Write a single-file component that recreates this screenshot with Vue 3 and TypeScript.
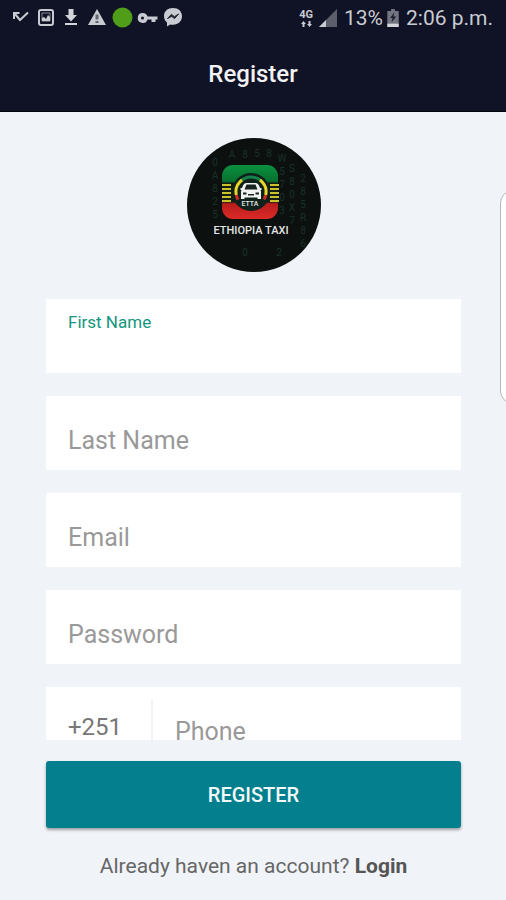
<script setup lang="ts">
import { reactive, ref } from 'vue'

interface Field {
  id: string
  label: string
  type: string
}

interface Rain {
  x: number
  y: number
  glyphs: string[]
}

const fields: Field[] = [
  { id: 'first-name', label: 'First Name', type: 'text' },
  { id: 'last-name', label: 'Last Name', type: 'text' },
  { id: 'email', label: 'Email', type: 'email' },
  { id: 'password', label: 'Password', type: 'password' },
]

const values = reactive<Record<string, string>>({
  'first-name': '',
  'last-name': '',
  email: '',
  password: '',
  phone: '',
})

const active = ref('first-name')

const isFloating = (id: string): boolean => active.value === id || values[id] !== ''

const rain: Rain[] = [
  { x: 28, y: 28, glyphs: ['0', 'A', '8', '2', '5'] },
  { x: 45, y: 20, glyphs: ['A'] },
  { x: 58, y: 20, glyphs: ['8'] },
  { x: 58, y: 118, glyphs: ['0'] },
  { x: 70, y: 19, glyphs: ['5'] },
  { x: 82, y: 19, glyphs: ['8'] },
  { x: 92, y: 118, glyphs: ['2'] },
  { x: 95, y: 24, glyphs: ['W', '5', '7', '0', '3'] },
  { x: 105, y: 34, glyphs: ['S', '8', '0', 'X', '7'] },
  { x: 116, y: 44, glyphs: ['2', '8', '5', 'R', '8', '6'] },
]
</script>

<template>
  <div class="screen">
    <header class="top">
      <div class="status">
        <div class="status-icons">
          <svg width="18" height="20" viewBox="0 0 18 20" aria-hidden="true">
            <path d="M2 11V5H7.500M2.500 5.500L8 12L16 4.500" fill="none" stroke="#c9cbd2" stroke-width="2" />
          </svg>
          <svg width="18" height="20" viewBox="0 0 18 20" aria-hidden="true">
            <rect x="2" y="2" width="14" height="15" rx="2" fill="none" stroke="#c9cbd2" stroke-width="2" />
            <path d="M5 5H13V13H5Z" fill="none" stroke="#85878f" stroke-width="1" />
            <path d="M5 13V10L7 9L9 11L11 7L13 9V13Z" fill="#c9cbd2" />
          </svg>
          <svg width="18" height="20" viewBox="0 0 18 20" aria-hidden="true">
            <path d="M6.500 1H11.500V7H15L9 13.500L3 7H6.500ZM3 15H15V17H3Z" fill="#d3d5db" />
          </svg>
          <svg width="20" height="20" viewBox="0 0 20 20" aria-hidden="true">
            <path d="M10 1L19 17H1Z" fill="#c9cbd2" />
            <path d="M8.500 6.500H11.500V11.500H8.500ZM8.500 13H11.500V15H8.500Z" fill="#62656f" />
          </svg>
          <svg width="18" height="20" viewBox="1 0 18 20" aria-hidden="true">
            <circle cx="9.500" cy="9.500" r="10" fill="#4f9d19" />
          </svg>
          <svg width="18" height="20" viewBox="1 0 18 20" aria-hidden="true">
            <path d="M5 5A5 5 0 1 0 9.500 11.500H13.500V14H17.500V11.500H19.500V8.500H9.500A5 5 0 0 0 5 5ZM4.500 8.500A1.500 1.500 0 1 1 4.500 11.500A1.500 1.500 0 1 1 4.500 8.500Z" fill="#c9cbd2" fill-rule="evenodd" />
          </svg>
          <svg width="18" height="20" viewBox="1 0 18 20" aria-hidden="true">
            <path d="M10 0C4.500 0 1 3.500 1 8C1 10.700 2.200 12.900 4 14.500V18.500L7.200 16.400C8.100 16.600 9 16.700 10 16.700C15.500 16.700 19 13 19 8.300C19 3.500 15.500 0 10 0Z" fill="#c9cbd2" />
            <path d="M4.500 10.500L8.500 6.300L11.300 8.700L15.500 6L11.600 10.600L8.700 8.400Z" fill="#242734" stroke="#242734" />
          </svg>
        </div>
        <div class="status-info">
          <span class="network">
            <span>4G</span>
            <svg width="11" height="6" viewBox="0 0 11 6" aria-hidden="true">
              <path d="M0 3L2.500 0L5 3H3.500V6H1.500V3ZM6 3H7.500V0H9.500V3H11L8.500 6Z" fill="#c9cbd2" />
            </svg>
          </span>
          <svg class="signal" width="18" height="18" viewBox="0 0 18 18" aria-hidden="true">
            <path d="M18 0V18H0Z" fill="#5c5f6b" />
            <path d="M7 11V18H0Z" fill="#c9cbd2" />
          </svg>
          <span>13%</span>
          <svg class="battery" width="12" height="18" viewBox="0 0 12 19" aria-hidden="true">
            <path d="M4 0H8V2H12V19H0V2H4Z" fill="#737680" />
            <path d="M0 15.500H12V19H0Z" fill="#d3d5db" />
            <path d="M7.500 3.500L3 9.500H5.500L4.500 14L9.500 8H6.500Z" fill="#1c1f30" />
          </svg>
          <span>2:06 p.m.</span>
        </div>
      </div>
      <h1>Register</h1>
    </header>

    <form class="form" @submit.prevent>
      <div class="scroller">
        <svg class="logo" viewBox="0 0 134 134" role="img" aria-label="Ethiopia Taxi">
          <defs>
            <clipPath id="disc"><circle cx="67" cy="67" r="67" /></clipPath>
            <linearGradient id="badge" x1="0" y1="0" x2="0" y2="1">
              <stop offset="0" stop-color="#0b9140" />
              <stop offset="0.300" stop-color="#08702f" />
              <stop offset="0.340" stop-color="#161d12" />
              <stop offset="0.680" stop-color="#161d12" />
              <stop offset="0.720" stop-color="#b81d1c" />
              <stop offset="1" stop-color="#dc2b28" />
            </linearGradient>
          </defs>
          <circle cx="67" cy="67" r="67" fill="#0c100f" />
          <g class="rain" clip-path="url(#disc)">
            <template v-for="column in rain" :key="column.x + '-' + column.y">
              <text
                v-for="(glyph, row) in column.glyphs"
                :key="row"
                :x="column.x"
                :y="column.y + row * 13"
              >{{ glyph }}</text>
            </template>
          </g>
          <rect x="35" y="27" width="56" height="54" rx="11" fill="url(#badge)" />
          <path d="M35 47H44M35 51H44M35 55H44M35 59H44M35 63H44M83 47H92M83 51H92M83 55H92M83 59H92M83 63H92" stroke="#c9c22c" stroke-width="2" />
          <circle cx="64" cy="54" r="19" fill="#10201b" />
          <g fill="none" stroke-width="3">
            <path d="M53.400 43.400A15 15 0 0 1 74.600 43.400" stroke="#15834a" />
            <path d="M49.300 57A15 15 0 0 1 55 42M78.700 57A15 15 0 0 0 73 42" stroke="#e8d52b" />
            <path d="M51 61.500A15 15 0 0 1 49.300 57M77 61.500A15 15 0 0 0 78.700 57" stroke="#cf2b24" />
          </g>
          <path d="M59 45H69Q71 45 72 47.500L73 50H74.500V52H73.500Q74 53 74 54V61H70.500V59.500H57.500V61H54V54Q54 53 54.500 52H53.500V50H55L56 47.500Q57 45 59 45Z" fill="#f1f3f3" />
          <path d="M59.500 46.500H68.500L70.500 51.500H57.500ZM56 54.500H59.500V56.500H56ZM68.500 54.500H72V56.500H68.500ZM61 56H67V57.500H61Z" fill="#18221f" />
          <text class="badge-text" x="63" y="68">ETTA</text>
          <text class="logo-text" x="64" y="96">ETHIOPIA TAXI</text>
        </svg>

        <div
          v-for="field in fields"
          :key="field.id"
          class="field"
          :class="{ floating: isFloating(field.id) }"
        >
          <label :for="field.id">{{ field.label }}</label>
          <input
            :id="field.id"
            v-model="values[field.id]"
            :type="field.type"
            @focus="active = field.id"
          />
        </div>

        <div class="phone-row">
          <span class="code">+251</span>
          <div class="field" :class="{ floating: isFloating('phone') }">
            <label for="phone">Phone</label>
            <input id="phone" v-model="values.phone" type="tel" @focus="active = 'phone'" />
          </div>
        </div>
      </div>

      <button class="submit" type="submit">REGISTER</button>
      <p class="login">Already haven an account? <a href="#login">Login</a></p>
    </form>

    <div class="edge-handle"></div>
  </div>
</template>

<style>
body {
  margin: 0;
  background: #f0f4f8;
}
</style>

<style scoped>
* {
  box-sizing: border-box;
}

.screen {
  position: relative;
  display: flex;
  flex-direction: column;
  height: 100vh;
  overflow: hidden;
  background: #f0f4f8;
  color: #666;
  font-family: Roboto, "Liberation Sans", sans-serif;
}

.top {
  flex: none;
  background: #101225;
  border-bottom: 1px solid #05060d;
  color: #f2f2f4;
}

.status {
  display: flex;
  align-items: center;
  justify-content: space-between;
  height: 36px;
  padding: 0 13px 0 12px;
}

.status-icons {
  display: flex;
  align-items: center;
  gap: 7px;
}

.status-icons svg {
  flex: none;
  overflow: visible;
}

.status-info {
  display: flex;
  align-items: center;
  color: #c9cbd2;
  font-size: 21px;
  line-height: 36px;
  white-space: nowrap;
}

.network {
  display: flex;
  flex-direction: column;
  align-items: center;
  gap: 1px;
  font-size: 11px;
  font-weight: 700;
  line-height: 10px;
}

.signal {
  margin: 0 7px 0 6px;
}

.battery {
  margin: 0 7px 0 4px;
}

h1 {
  margin: 0;
  padding-top: 1px;
  font-size: 24px;
  font-weight: 500;
  line-height: 74px;
  text-align: center;
}

.form {
  display: flex;
  flex: 1;
  flex-direction: column;
  min-height: 0;
  padding: 0 45px 18px 46px;
}

.scroller {
  display: flex;
  flex: 1;
  flex-direction: column;
  gap: 23px;
  min-height: 0;
  overflow: hidden;
  padding-top: 26px;
}

.logo {
  flex: none;
  align-self: center;
  width: 134px;
  height: 134px;
  margin-bottom: 4px;
}

.rain {
  fill: #193229;
  font-size: 10px;
  text-anchor: middle;
}

.badge-text {
  fill: #e3e6e5;
  font-size: 7px;
  font-weight: 500;
  text-anchor: middle;
}

.logo-text {
  fill: #e3e6e5;
  font-size: 11px;
  font-weight: 500;
  text-anchor: middle;
}

.field {
  display: grid;
  flex: none;
  height: 74px;
  background: #fff;
}

.field label,
.field input {
  grid-area: 1 / 1;
  min-width: 0;
}

.field label {
  z-index: 1;
  padding: 29px 22px 0;
  color: #999;
  font-size: 25px;
  line-height: 32px;
  pointer-events: none;
}

.field.floating label {
  padding-top: 13px;
  color: #14957e;
  font-size: 17px;
  line-height: 20px;
}

.field input {
  width: 100%;
  padding: 29px 22px 0;
  border: 0;
  outline: 0;
  background: transparent;
  color: #444;
  font: inherit;
  font-size: 25px;
}

.phone-row {
  display: flex;
  flex: none;
  height: 74px;
  background: #fff;
}

.phone-row .field {
  flex: 1;
}

.code {
  width: 107px;
  margin-top: 13px;
  padding-left: 22px;
  border-right: 2px solid #f1f3f5;
  color: #777;
  font-size: 24px;
  line-height: 54px;
}

.submit {
  flex: none;
  height: 67px;
  margin-top: 21px;
  border: 0;
  border-radius: 3px;
  background: #047f8d;
  box-shadow: 0 2px 3px rgba(0, 0, 0, 0.350);
  color: #f4fafa;
  font: inherit;
  font-size: 20px;
  font-weight: 500;
}

.login {
  margin: 22px 0 0;
  font-size: 21px;
  line-height: 32px;
  text-align: center;
}

.login a {
  color: #555;
  font-weight: 700;
  text-decoration: none;
}

.edge-handle {
  position: absolute;
  top: 190px;
  right: -20px;
  width: 26px;
  height: 214px;
  border: 1px solid #b5b7ba;
  border-radius: 20px;
  background: #fff;
}
</style>
